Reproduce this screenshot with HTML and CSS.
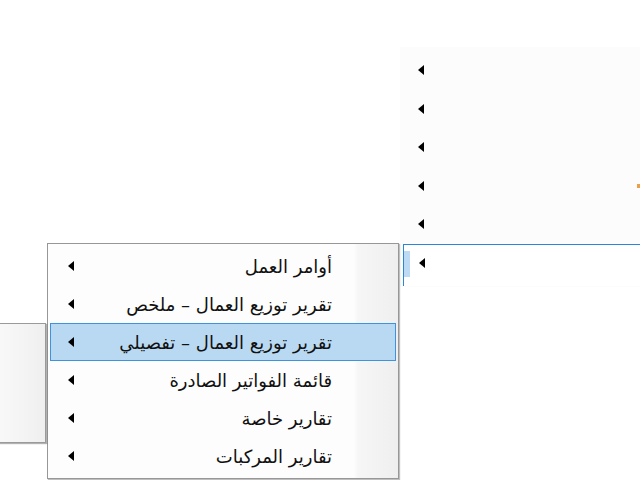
FILE: index.html
```html
<!DOCTYPE html>
<html lang="ar" dir="rtl">
<head>
    <meta charset="UTF-8">
    <meta name="viewport" content="width=device-width, initial-scale=1.0">
    <title>التقارير</title>
    <link rel="stylesheet" href="styles.css">
</head>
<body>
    <div class="desk">
        <!-- القائمة الرئيسية -->
        <ul class="menu menu-main">
            <li class="item"><span class="arrow"></span></li>
            <li class="item"><span class="arrow"></span></li>
            <li class="item"><span class="arrow"></span></li>
            <li class="item"><span class="arrow"></span><span class="dot"></span></li>
            <li class="item"><span class="arrow"></span></li>
            <li class="item focus"><span class="arrow"></span></li>
        </ul>

        <!-- قائمة التقارير -->
        <ul class="menu menu-sub">
            <li class="item"><span class="label">أوامر العمل</span><span class="arrow"></span></li>
            <li class="item"><span class="label">تقرير توزيع العمال – ملخص</span><span class="arrow"></span></li>
            <li class="item active"><span class="label">تقرير توزيع العمال – تفصيلي</span><span class="arrow"></span></li>
            <li class="item"><span class="label">قائمة الفواتير الصادرة</span><span class="arrow"></span></li>
            <li class="item"><span class="label">تقارير خاصة</span><span class="arrow"></span></li>
            <li class="item"><span class="label">تقارير المركبات</span><span class="arrow"></span></li>
        </ul>

        <div class="menu menu-third"></div>
    </div>
</body>
</html>
```

FILE: styles.css
```css
*{
    box-sizing: border-box;
    margin: 0;
    padding: 0;
}
body{
    width: 640px;
    height: 480px;
    overflow: hidden;
    background: #ffffff;
    font-family: "DejaVu Sans", "Noto Sans", sans-serif;
    font-size: 18px;
    color: #111;
}
.desk{
    position: relative;
    width: 640px;
    height: 480px;
}
.menu{
    list-style: none;
    position: absolute;
}
.item{
    display: flex;
    align-items: center;
    justify-content: space-between;
    position: relative;
}
.arrow{
    flex: none;
    width: 0;
    height: 0;
    border-top: 5px solid transparent;
    border-bottom: 5px solid transparent;
    border-right: 6px solid #000;
}

/* main menu, cut by the right edge */
.menu-main{
    left: 400px;
    top: 47px;
    width: 260px;
    height: 240px;
    padding-top: 4px;
    background: #fcfcfc;
}
.menu-main .item{
    height: 38.5px;
    justify-content: flex-end;
    padding-left: 18px;
}
.menu-main .focus{
    height: 42px;
    margin-left: 3px;
    padding: 0 0 4px 15px;
    border-top: 1px solid #2a86d8;
    border-left: 1px solid #2a86d8;
    background: #ffffff;
}
.menu-main .focus::before{
    content: "";
    position: absolute;
    left: 0;
    top: 6px;
    width: 6px;
    height: 26px;
    background: #bcdaf3;
}
.dot{
    position: absolute;
    left: 237px;
    top: 17px;
    width: 3px;
    height: 4px;
    background: #e9a049;
}

/* reports submenu */
.menu-sub{
    left: 47px;
    top: 243px;
    width: 352px;
    padding: 3px 2px;
    background: linear-gradient(to left, #efefef 0, #f6f6f6 40px, #fdfdfd 44px, #fdfdfd 100%);
    border: 1px solid #979797;
    box-shadow: 1px 1px 1px rgba(0,0,0,0.25);
}
.menu-sub .item{
    height: 38px;
    padding: 0 63px 0 17px;
    border: 1px solid transparent;
}
.menu-sub .active{
    background: #b9d9f3;
    border-color: #3d93dd;
}
.label{
    white-space: nowrap;
    line-height: 1;
    padding-top: 2px;
}

/* third level, cut by the left edge */
.menu-third{
    left: -4px;
    top: 323px;
    width: 50px;
    height: 120px;
    background: linear-gradient(to right, #f9f9f9, #efefef);
    border: 1px solid #9a9a9a;
    box-shadow: 1px 1px 1px rgba(0,0,0,0.3);
}
```
